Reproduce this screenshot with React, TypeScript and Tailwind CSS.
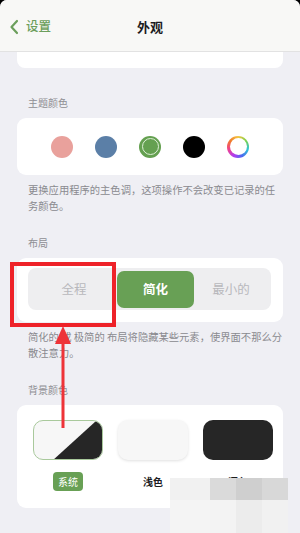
import React from "react";

const font = { fontFamily: '"Noto Sans CJK SC", "Noto Sans", sans-serif' };

function Label({ children }: { children: React.ReactNode }) {
  return (
    <p className="px-[28px] text-[10px] leading-[14px] text-[#8e8e93]">{children}</p>
  );
}

function Note({ children }: { children: React.ReactNode }) {
  return (
    <p className="pl-[28px] pr-[16px] text-[10.3px] leading-[16px] text-[#8a8a8f]">{children}</p>
  );
}

export default function App() {
  const swatches = ["#e9a19c", "#5b7fa7", "green", "#000000", "ring"];

  return (
    <div className="w-[300px] h-[533px] bg-black overflow-hidden" style={font}>
      <div className="relative h-full bg-[#efeff4] rounded-t-[7px] overflow-hidden">
        {/* nav bar */}
        <div className="relative h-[52px] bg-[#f8f8f6] border-b border-[#e2e2e2] flex items-center">
          <div className="flex items-center pl-[9px] pt-[2px] text-[#6c9f5c]">
            <svg width="10" height="16" viewBox="0 0 10 16" fill="none">
              <path d="M8 2L2.5 8L8 14" stroke="#6c9f5c" strokeWidth="2.2" strokeLinecap="round" strokeLinejoin="round" />
            </svg>
            <span className="ml-[7px] text-[12.5px] font-medium">设置</span>
          </div>
          <span className="absolute left-1/2 top-[17px] -translate-x-1/2 text-[13px] font-bold text-[#1c1c1e]">外观</span>
        </div>

        {/* tail of previous card */}
        <div className="mx-[17px] h-[16px] bg-white rounded-b-[8px]" />

        <div className="mt-[28px]">
          <Label>主题颜色</Label>
        </div>
        <div className="mx-[17px] mt-[8px] h-[57px] bg-white rounded-[9px] flex items-center justify-center gap-[22px]">
          {swatches.map((c) =>
            c === "green" ? (
              <div key={c} className="w-[22px] h-[22px] rounded-full bg-[#64a050] flex items-center justify-center">
                <div className="w-[17px] h-[17px] rounded-full border-[1.5px] border-[#dff0d8] bg-[#64a050]" />
              </div>
            ) : c === "ring" ? (
              <div
                key={c}
                className="w-[22px] h-[22px] rounded-full flex items-center justify-center"
                style={{ background: "conic-gradient(#f5c542, #7bd14a, #2ec4d6, #4a6cf0, #b13cf0, #f0428a, #f07a2a, #f5c542)" }}
              >
                <div className="w-[17px] h-[17px] rounded-full bg-white" />
              </div>
            ) : (
              <div key={c} className="w-[22px] h-[22px] rounded-full" style={{ background: c }} />
            )
          )}
        </div>
        <div className="mt-[7px]">
          <Note>更换应用程序的主色调，这项操作不会改变已记录的任务颜色。</Note>
        </div>

        <div className="mt-[22px]">
          <Label>布局</Label>
        </div>
        <div className="mx-[17px] mt-[8px] bg-white rounded-[9px] pt-[10px] pb-[12px] pl-[11px] pr-[12px]">
          <div className="h-[42px] bg-[#eeeef0] rounded-[8px] flex items-center px-[3px] text-[12.5px]">
            <div className="w-[86px] text-center text-[#b8b8bc]">全程</div>
            <div className="w-[77px] h-[37px] rounded-[7px] bg-[#68a055] flex items-center justify-center text-white font-bold">简化</div>
            <div className="flex-1 text-center text-[#b8b8bc]">最小的</div>
          </div>
        </div>
        <div className="mt-[7px]">
          <Note>简化的 或 极简的 布局将隐藏某些元素，使界面不那么分散注意力。</Note>
        </div>

        <div className="mt-[22px]">
          <Label>背景颜色</Label>
        </div>
        <div className="mx-[17px] mt-[8px] bg-white rounded-[9px] pt-[15px] pb-[17px] pl-[16px]">
          <div className="flex gap-[15px]">
            <div className="flex flex-col items-center w-[70px]">
              <div className="relative w-[70px] h-[40px] rounded-[10px] border border-[#a9c99c] overflow-hidden bg-[#f7f7f7]">
                <svg className="absolute inset-0" width="70" height="40" viewBox="0 0 70 40">
                  <polygon points="18,40 62,0 70,0 70,40" fill="#262626" />
                </svg>
              </div>
              <div className="mt-[12px] h-[19px] px-[5px] rounded-[4px] bg-[#68a055] text-white text-[10px] leading-[19px]">系统</div>
            </div>
            <div className="flex flex-col items-center w-[70px]">
              <div className="w-[70px] h-[40px] rounded-[10px] bg-[#f7f7f7] shadow-[0_1px_3px_rgba(0,0,0,0.12)]" />
              <div className="mt-[12px] h-[19px] text-[10px] leading-[19px] font-bold text-[#1c1c1e]">浅色</div>
            </div>
            <div className="flex flex-col items-center w-[70px]">
              <div className="w-[70px] h-[40px] rounded-[10px] bg-[#262626]" />
              <div className="mt-[12px] h-[19px] text-[10px] leading-[19px] font-bold text-[#1c1c1e]">深色</div>
            </div>
          </div>
        </div>

        {/* annotation: red box and arrow */}
        <div className="absolute left-[10px] top-[262px] w-[106px] h-[65px] border-[4px] border-[#ee2229]" />
        <svg className="absolute left-[54px] top-[326px]" width="18" height="102" viewBox="0 0 18 102">
          <polygon points="9,0 17,18 1,18" fill="#ee3338" />
          <rect x="7.5" y="16" width="3" height="86" fill="#ee3338" />
        </svg>

        {/* pixelated watermark blur */}
        <div className="absolute left-[170px] top-[478px] grid grid-cols-[40px_26px_26px_26px] grid-rows-[22px_33px]">
          <div className="bg-[#f1f1f1]" />
          <div className="bg-[#dadada]" />
          <div className="bg-[#cfcfcf]" />
          <div className="bg-[#d8d8d8]" />
          <div className="bg-[#f4f4f4]" />
          <div className="bg-[#f3f3f3]" />
          <div className="bg-[#ececec]" />
          <div className="bg-[#f1f1f1]" />
        </div>
      </div>
    </div>
  );
}
